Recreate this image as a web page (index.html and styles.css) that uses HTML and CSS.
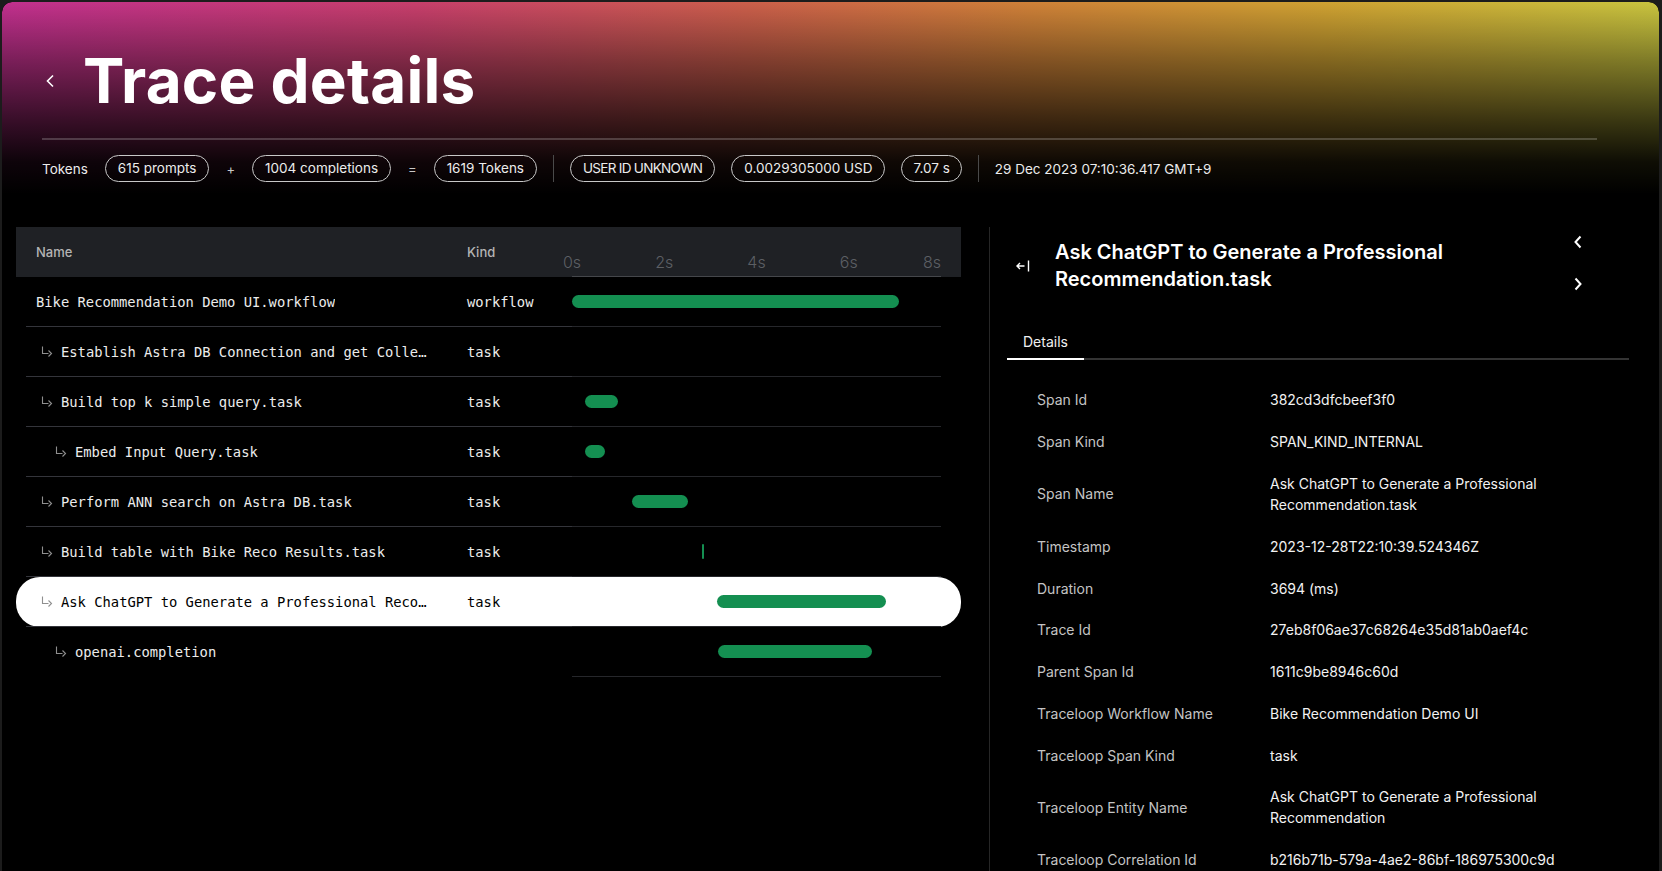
FILE: index.html
```html
<!DOCTYPE html>
<html lang="en">
<head>
<meta charset="utf-8">
<title>Trace details</title>
<link rel="stylesheet" href="styles.css">
</head>
<body>
<div class="app">
  <header class="hero">
    <div class="title-row">
      <button class="back" aria-label="Back">
        <svg width="10" height="14" viewBox="0 0 10 14"><path d="M8 1.5 L2.5 7 L8 12.5" fill="none" stroke="#fff" stroke-width="1.6"/></svg>
      </button>
      <h1>Trace details</h1>
    </div>
    <div class="hero-rule"></div>
    <div class="stats">
      <span class="stat-label">Tokens</span>
      <span class="pill">615 prompts</span>
      <span class="op">+</span>
      <span class="pill">1004 completions</span>
      <span class="op">=</span>
      <span class="pill">1619 Tokens</span>
      <span class="vsep"></span>
      <span class="pill pill-caps">USER ID UNKNOWN</span>
      <span class="pill">0.0029305000 USD</span>
      <span class="pill pill-short">7.07 s</span>
      <span class="vsep"></span>
      <span class="stat-date">29 Dec 2023 07:10:36.417 GMT+9</span>
    </div>
  </header>

  <main class="main">
    <section class="spans">
      <div class="spans-head">
        <div class="th th-name">Name</div>
        <div class="th th-kind">Kind</div>
        <div class="th th-time">
          <div class="ticks">
            <span class="tick"><span>0s</span></span>
            <span class="tick"><span>2s</span></span>
            <span class="tick"><span>4s</span></span>
            <span class="tick"><span>6s</span></span>
            <span class="tick tick-last"><span>8s</span></span>
          </div>
        </div>
        <div class="th"></div>
      </div>

      <div class="span-row">
        <div class="pad"></div>
        <div class="cell name lvl0"><span class="txt">Bike Recommendation Demo UI.workflow</span></div>
        <div class="cell kind">workflow</div>
        <div class="cell time"><span class="bar" style="margin-left:0px;width:327px"></span></div>
        <div class="pad"></div>
      </div>

      <div class="span-row">
        <div class="pad"></div>
        <div class="cell name lvl1"><svg class="arrow" width="13" height="14" viewBox="0 0 13 14"><path d="M1.5 1.5 V8.5 H7.5 M7.5 5.5 L10.5 8.5 L7.5 11.5" fill="none" stroke="#8f8f8f" stroke-width="1.1"/></svg><span class="txt">Establish Astra DB Connection and get Collection.task</span></div>
        <div class="cell kind">task</div>
        <div class="cell time"></div>
        <div class="pad"></div>
      </div>

      <div class="span-row">
        <div class="pad"></div>
        <div class="cell name lvl1"><svg class="arrow" width="13" height="14" viewBox="0 0 13 14"><path d="M1.5 1.5 V8.5 H7.5 M7.5 5.5 L10.5 8.5 L7.5 11.5" fill="none" stroke="#8f8f8f" stroke-width="1.1"/></svg><span class="txt">Build top k simple query.task</span></div>
        <div class="cell kind">task</div>
        <div class="cell time"><span class="bar" style="margin-left:13px;width:33px"></span></div>
        <div class="pad"></div>
      </div>

      <div class="span-row">
        <div class="pad"></div>
        <div class="cell name lvl2"><svg class="arrow" width="13" height="14" viewBox="0 0 13 14"><path d="M1.5 1.5 V8.5 H7.5 M7.5 5.5 L10.5 8.5 L7.5 11.5" fill="none" stroke="#8f8f8f" stroke-width="1.1"/></svg><span class="txt">Embed Input Query.task</span></div>
        <div class="cell kind">task</div>
        <div class="cell time"><span class="bar" style="margin-left:13px;width:20px"></span></div>
        <div class="pad"></div>
      </div>

      <div class="span-row">
        <div class="pad"></div>
        <div class="cell name lvl1"><svg class="arrow" width="13" height="14" viewBox="0 0 13 14"><path d="M1.5 1.5 V8.5 H7.5 M7.5 5.5 L10.5 8.5 L7.5 11.5" fill="none" stroke="#8f8f8f" stroke-width="1.1"/></svg><span class="txt">Perform ANN search on Astra DB.task</span></div>
        <div class="cell kind">task</div>
        <div class="cell time"><span class="bar" style="margin-left:60px;width:56px"></span></div>
        <div class="pad"></div>
      </div>

      <div class="span-row">
        <div class="pad"></div>
        <div class="cell name lvl1"><svg class="arrow" width="13" height="14" viewBox="0 0 13 14"><path d="M1.5 1.5 V8.5 H7.5 M7.5 5.5 L10.5 8.5 L7.5 11.5" fill="none" stroke="#8f8f8f" stroke-width="1.1"/></svg><span class="txt">Build table with Bike Reco Results.task</span></div>
        <div class="cell kind">task</div>
        <div class="cell time"><span class="bar bar-thin" style="margin-left:130px;width:2px"></span></div>
        <div class="pad"></div>
      </div>

      <div class="span-row selected">
        <div class="pad"></div>
        <div class="cell name lvl1"><svg class="arrow" width="13" height="14" viewBox="0 0 13 14"><path d="M1.5 1.5 V8.5 H7.5 M7.5 5.5 L10.5 8.5 L7.5 11.5" fill="none" stroke="#8f8f8f" stroke-width="1.1"/></svg><span class="txt">Ask ChatGPT to Generate a Professional Recommendation.task</span></div>
        <div class="cell kind">task</div>
        <div class="cell time"><span class="bar" style="margin-left:145px;width:169px"></span></div>
        <div class="pad"></div>
      </div>

      <div class="span-row last">
        <div class="pad"></div>
        <div class="cell name lvl2"><svg class="arrow" width="13" height="14" viewBox="0 0 13 14"><path d="M1.5 1.5 V8.5 H7.5 M7.5 5.5 L10.5 8.5 L7.5 11.5" fill="none" stroke="#8f8f8f" stroke-width="1.1"/></svg><span class="txt">openai.completion</span></div>
        <div class="cell kind"></div>
        <div class="cell time"><span class="bar" style="margin-left:146px;width:154px"></span></div>
        <div class="pad"></div>
      </div>
    </section>

    <aside class="detail">
      <div class="detail-head">
        <button class="collapse" aria-label="Collapse">
          <svg width="16" height="14" viewBox="0 0 16 14"><path d="M9.5 7 H2 M5 4 L2 7 L5 10 M13.5 1.5 V12.5" fill="none" stroke="#fff" stroke-width="1.4"/></svg>
        </button>
        <h2 class="detail-title">Ask ChatGPT to Generate a Professional Recommendation.task</h2>
        <div class="nav">
          <button class="nav-btn" aria-label="Previous"><svg width="10" height="14" viewBox="0 0 10 14"><path d="M7.5 1.5 L2.5 7 L7.5 12.5" fill="none" stroke="#fff" stroke-width="2"/></svg></button>
          <button class="nav-btn" aria-label="Next"><svg width="10" height="14" viewBox="0 0 10 14"><path d="M2.5 1.5 L7.5 7 L2.5 12.5" fill="none" stroke="#fff" stroke-width="2"/></svg></button>
        </div>
      </div>

      <div class="tabs">
        <span class="tab active">Details</span>
      </div>

      <dl class="props">
        <div class="prop"><dt>Span Id</dt><dd>382cd3dfcbeef3f0</dd></div>
        <div class="prop"><dt>Span Kind</dt><dd>SPAN_KIND_INTERNAL</dd></div>
        <div class="prop"><dt>Span Name</dt><dd>Ask ChatGPT to Generate a Professional Recommendation.task</dd></div>
        <div class="prop"><dt>Timestamp</dt><dd>2023-12-28T22:10:39.524346Z</dd></div>
        <div class="prop"><dt>Duration</dt><dd>3694 (ms)</dd></div>
        <div class="prop"><dt>Trace Id</dt><dd>27eb8f06ae37c68264e35d81ab0aef4c</dd></div>
        <div class="prop"><dt>Parent Span Id</dt><dd>1611c9be8946c60d</dd></div>
        <div class="prop"><dt>Traceloop Workflow Name</dt><dd>Bike Recommendation Demo UI</dd></div>
        <div class="prop"><dt>Traceloop Span Kind</dt><dd>task</dd></div>
        <div class="prop"><dt>Traceloop Entity Name</dt><dd>Ask ChatGPT to Generate a Professional Recommendation</dd></div>
        <div class="prop"><dt>Traceloop Correlation Id</dt><dd>b216b71b-579a-4ae2-86bf-186975300c9d</dd></div>
        <div class="prop"><dt>Traceloop Association Properties</dt><dd>{}</dd></div>
      </dl>
    </aside>
  </main>
</div>
</body>
</html>
```

FILE: styles.css
```css
* { box-sizing: border-box; }

html, body {
  margin: 0;
  height: 100%;
  overflow: hidden;
}

body {
  background: #1c1c1c;
  color: #fff;
  font-family: Inter, Roboto, "Liberation Sans", sans-serif;
}

button {
  background: none;
  border: 0;
  padding: 0;
  margin: 0;
  cursor: pointer;
  display: inline-flex;
  align-items: center;
  justify-content: center;
}

.app {
  margin: 2px 3px 0 2px;
  height: calc(100vh - 2px);
  background: #000;
  border-radius: 10px 10px 0 0;
  overflow: hidden;
  display: flex;
  flex-direction: column;
}

/* ---------- hero ---------- */
.hero {
  flex: none;
  height: 200px;
  padding: 47px 62px 0 40px;
  border-radius: 10px 10px 0 0;
  background:
    linear-gradient(to bottom, rgba(0,0,0,0) 0%, rgba(0,0,0,0.38) 30%, rgba(0,0,0,0.72) 60%, rgba(0,0,0,0.93) 80%, #000 96%),
    linear-gradient(to right, #c2308e 0%, #c83f6c 25%, #cc5f4b 45%, #cf8138 62%, #cfa232 80%, #c9c43f 100%);
}

.title-row {
  display: flex;
  align-items: center;
}

.back {
  width: 10px;
  height: 14px;
  margin-left: 3px;
}

.title-row h1 {
  margin: 0 0 0 28px;
  font-size: 62px;
  line-height: 64px;
  font-weight: 700;
  letter-spacing: 0.2px;
}

.hero-rule {
  margin-top: 25px;
  height: 2px;
  background: rgba(255, 255, 255, 0.2);
}

.stats {
  margin-top: 15px;
  display: flex;
  align-items: center;
  gap: 16px;
  font-size: 13.5px;
  color: #ececec;
}

.stat-label {
  margin-right: 1px;
}

.pill {
  height: 27px;
  line-height: 25px;
  padding: 0 12px;
  border: 1px solid #c8c8c8;
  border-radius: 14px;
  white-space: nowrap;
}

.pill-caps {
  letter-spacing: -0.7px;
}

.pill-short {
  padding: 0 11px;
}

.op {
  color: #c8c8c8;
  font-size: 13px;
  margin: 0 1px;
}

.vsep {
  width: 1px;
  height: 27px;
  background: #4a4a4a;
}

/* ---------- main ---------- */
.main {
  flex: 1;
  min-height: 0;
  margin-top: 25px;
  display: flex;
}

.spans {
  flex: none;
  width: 945px;
  margin-left: 14px;
}

.spans-head {
  display: grid;
  grid-template-columns: 451px 105px 369px 20px;
  height: 50px;
  background: #1f2125;
}

.th {
  display: flex;
  align-items: center;
  font-size: 13px;
  font-weight: 500;
  color: #b4b4b4;
}

.th-name { padding-left: 20px; }

.th-time {
  align-items: flex-end;
  padding-bottom: 4px;
  border-bottom: 1px solid #45474b;
}

.ticks {
  display: flex;
  width: 100%;
  font-size: 16px;
  font-weight: 300;
  color: #5c5f64;
}

.tick {
  flex: 1 1 0;
  min-width: 0;
  display: block;
}

.tick span {
  display: inline-block;
  transform: translateX(-50%);
}

.tick-last {
  flex: 0 0 0;
  width: 0;
  white-space: nowrap;
}

.tick-last span {
  transform: translateX(-100%);
}

.span-row {
  display: grid;
  grid-template-columns: 10px 441px 105px 369px 20px;
  height: 50px;
  font-family: "DejaVu Sans Mono", "Liberation Mono", monospace;
  font-size: 13.8px;
  color: #ececec;
}

.span-row.selected {
  background: #fff;
  color: #000;
  border-radius: 24px;
}

.cell {
  display: flex;
  align-items: center;
  min-width: 0;
}

.name, .kind {
  border-bottom: 1px solid #34353b;
}

.span-row.last .name,
.span-row.last .kind {
  border-bottom-color: transparent;
}

.name {
  padding-left: 10px;
  padding-right: 38px;
}

.txt {
  white-space: nowrap;
  overflow: hidden;
  text-overflow: ellipsis;
  min-width: 0;
}

.arrow {
  flex: none;
  margin-right: 7px;
}

.lvl1 .arrow { margin-left: 5px; }
.lvl2 .arrow { margin-left: 19px; }

.time {
  border-bottom: 1px solid #26272b;
}

.bar {
  display: block;
  height: 13px;
  border-radius: 7px;
  background: #148f51;
}

.bar-thin {
  height: 15px;
  border-radius: 1px;
}

/* ---------- detail panel ---------- */
.detail {
  flex: 1;
  min-width: 0;
  margin-left: 28px;
  border-left: 1px solid #262626;
  padding: 0 30px 0 17px;
  overflow: hidden;
}

.detail-head {
  display: flex;
  align-items: center;
  padding: 12px 46px 0 8px;
}

.collapse {
  flex: none;
  width: 16px;
  height: 14px;
}

.detail-title {
  flex: 1;
  margin: 0 0 0 24px;
  font-size: 20px;
  line-height: 27px;
  font-weight: 600;
  letter-spacing: 0;
}

.nav {
  flex: none;
  display: flex;
  flex-direction: column;
  gap: 28px;
  margin-top: -6px;
}

.nav-btn {
  width: 10px;
  height: 14px;
}

.tabs {
  margin-top: 31px;
  display: flex;
  border-bottom: 2px solid #343434;
}

.tab {
  padding: 8px 16px 6px;
  margin-bottom: -2px;
  font-size: 14px;
  line-height: 20px;
  color: #f0f0f0;
}

.tab.active {
  border-bottom: 2px solid #fff;
}

.props {
  margin: 19px 0 0;
  padding-left: 30px;
  font-size: 14px;
  line-height: 21px;
}

.prop {
  display: grid;
  grid-template-columns: 233px 320px;
  align-items: center;
  padding: 10.4px 0;
}

.prop dt {
  color: #c4c4c4;
}

.prop dd {
  margin: 0;
  color: #f2f2f2;
}
```
